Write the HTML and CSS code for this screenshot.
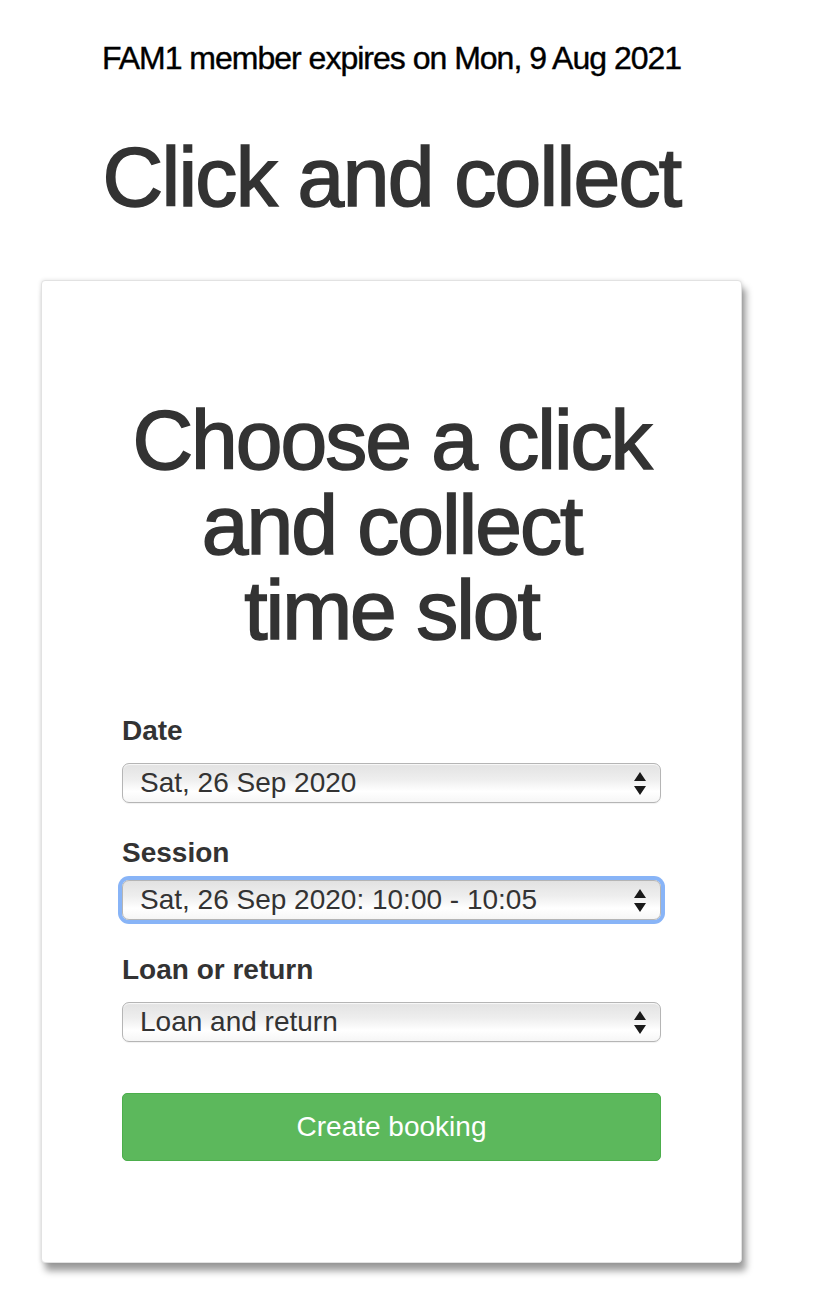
FILE: index.html
```html
<!DOCTYPE html>
<html lang="en">
<head>
<meta charset="utf-8">
<title>Click and collect</title>
<link rel="stylesheet" href="styles.css">
</head>
<body>
<div class="page">
  <p class="member">FAM1 member expires on Mon, 9 Aug 2021</p>
  <h1 class="title">Click and collect</h1>
  <div class="card">
    <h2 class="card-title">Choose a click and collect time slot</h2>
    <form class="form">
      <div class="field">
        <label class="label">Date</label>
        <div class="select">
          <span class="select-text">Sat, 26 Sep 2020</span>
          <svg class="arrows" width="14" height="24" viewBox="0 0 14 24"><path d="M7 1 L13 10 L1 10 Z M1 15 L13 15 L7 24 Z" fill="#1a1a1a"/></svg>
        </div>
      </div>
      <div class="field field-focus">
        <label class="label">Session</label>
        <div class="select select-focus">
          <span class="select-text">Sat, 26 Sep 2020: 10:00 - 10:05</span>
          <svg class="arrows" width="14" height="24" viewBox="0 0 14 24"><path d="M7 1 L13 10 L1 10 Z M1 15 L13 15 L7 24 Z" fill="#1a1a1a"/></svg>
        </div>
      </div>
      <div class="field">
        <label class="label">Loan or return</label>
        <div class="select">
          <span class="select-text">Loan and return</span>
          <svg class="arrows" width="14" height="24" viewBox="0 0 14 24"><path d="M7 1 L13 10 L1 10 Z M1 15 L13 15 L7 24 Z" fill="#1a1a1a"/></svg>
        </div>
      </div>
      <div class="button">Create booking</div>
    </form>
  </div>
</div>
</body>
</html>
```
FILE: styles.css
```css
html, body {
  margin: 0;
  padding: 0;
  background: #ffffff;
}
body {
  font-family: "Liberation Sans", Arial, Helvetica, sans-serif;
  color: #333333;
}
.page {
  width: 701px;
  margin-left: 41px;
  padding-top: 40px;
  padding-bottom: 40px;
}
.member {
  margin: 0;
  font-size: 32px;
  line-height: 36px;
  color: #000000;
  text-align: center;
  letter-spacing: -1px;
  -webkit-text-stroke: 0.4px #000000;
}
.title {
  margin: 53px 0 0 0;
  font-size: 84px;
  line-height: 96px;
  font-weight: normal;
  letter-spacing: -1.7px;
  text-align: center;
  color: #333333;
  -webkit-text-stroke: 1.6px #333333;
}
.card {
  margin-top: 55px;
  background: #ffffff;
  border: 1px solid #e2e2e2;
  border-radius: 4px;
  box-shadow: 4px 8px 7px rgba(0, 0, 0, 0.38), 0 0 4px rgba(0, 0, 0, 0.12);
  padding: 117px 80px 101px 80px;
}
.card-title {
  margin: 0;
  font-size: 84px;
  line-height: 85px;
  font-weight: normal;
  letter-spacing: -2px;
  text-align: center;
  color: #333333;
  -webkit-text-stroke: 1.6px #333333;
}
.form {
  margin-top: 62px;
  display: flex;
  flex-direction: column;
}
.field {
  display: flex;
  flex-direction: column;
  gap: 16px;
  margin-bottom: 34px;
}
.field-focus {
  gap: 11px;
}
.label {
  font-size: 28px;
  line-height: 32px;
  font-weight: bold;
  color: #333333;
}
.select {
  box-sizing: border-box;
  height: 40px;
  border: 1px solid #b5b5b5;
  border-radius: 7px;
  background: linear-gradient(to bottom, #e2e2e2 0%, #eeeeee 40%, #ffffff 72%, #f6f6f6 100%);
  box-shadow: inset 0 1px 1px rgba(255, 255, 255, 0.8), 0 1px 1px rgba(0, 0, 0, 0.06);
  display: flex;
  align-items: center;
  justify-content: space-between;
  padding: 0 13px 0 17px;
}
.select-focus {
  box-shadow: 0 0 0 4px #88b4f7;
}
.select-text {
  font-size: 28px;
  color: #333333;
  line-height: 32px;
}
.arrows {
  display: block;
}
.button {
  margin-top: 17px;
  box-sizing: border-box;
  height: 68px;
  background: #5cb85c;
  border: 1px solid #4cae4c;
  border-radius: 5px;
  color: #ffffff;
  font-size: 28px;
  display: flex;
  align-items: center;
  justify-content: center;
}
```
